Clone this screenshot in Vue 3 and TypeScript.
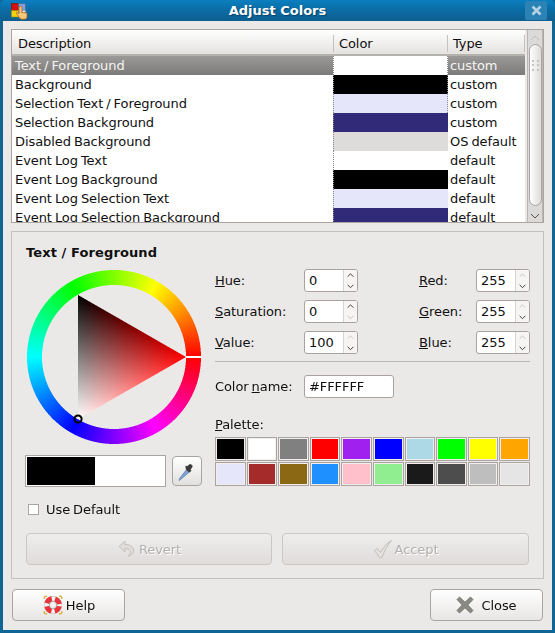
<script setup lang="ts">
import { onMounted, ref } from 'vue'

interface Row { name: string; color: string; type: string }
interface Spin { key: string; post: string; value: string; upOff: boolean; downOff: boolean }

const rows: Row[] = [
  { name: 'Text / Foreground', color: '#ffffff', type: 'custom' },
  { name: 'Background', color: '#000000', type: 'custom' },
  { name: 'Selection Text / Foreground', color: '#e6e6fa', type: 'custom' },
  { name: 'Selection Background', color: '#312a78', type: 'custom' },
  { name: 'Disabled Background', color: '#dedbdb', type: 'OS default' },
  { name: 'Event Log Text', color: '#ffffff', type: 'default' },
  { name: 'Event Log Background', color: '#000000', type: 'default' },
  { name: 'Event Log Selection Text', color: '#e6e6fa', type: 'default' },
  { name: 'Event Log Selection Background', color: '#312a78', type: 'default' },
]

const spins: Spin[] = [
  { key: 'H', post: 'ue:', value: '0', upOff: false, downOff: false },
  { key: 'R', post: 'ed:', value: '255', upOff: true, downOff: false },
  { key: 'S', post: 'aturation:', value: '0', upOff: false, downOff: true },
  { key: 'G', post: 'reen:', value: '255', upOff: true, downOff: false },
  { key: 'V', post: 'alue:', value: '100', upOff: true, downOff: false },
  { key: 'B', post: 'lue:', value: '255', upOff: true, downOff: false },
]

const palette: string[] = [
  '#000000', '#ffffff', '#808080', '#ff0000', '#a020f0', '#0000ff', '#add8e6', '#00ff00', '#ffff00', '#ffa500',
  '#e6e6fa', '#a52a2a', '#8b6914', '#1e90ff', '#ffc0cb', '#90ee90', '#1a1a1a', '#4d4d4d', '#bebebe', '#e5e5e5',
]

const wheel = ref<HTMLCanvasElement | null>(null)

function hsv(h: number): [number, number, number] {
  const i = Math.floor(h * 6) % 6
  const f = h * 6 - Math.floor(h * 6)
  const t: [number, number, number][] = [
    [1, f, 0], [1 - f, 1, 0], [0, 1, f], [0, 1 - f, 1], [f, 0, 1], [1, 0, 1 - f],
  ]
  const c = t[i]
  return [c[0] * 255, c[1] * 255, c[2] * 255]
}

onMounted(() => {
  const cv = wheel.value
  if (!cv) return
  const ctx = cv.getContext('2d')
  if (!ctx) return
  const size = 176
  const img = ctx.createImageData(size, size)
  const cx = 88, cy = 88, ro = 87, ri = 72
  const ax = 160, ay = 88, bx = 52, by = 26, wx = 52, wy = 150
  const den = (by - wy) * (ax - wx) + (wx - bx) * (ay - wy)
  const ss = 3
  for (let y = 0; y < size; y++) {
    for (let x = 0; x < size; x++) {
      let r = 0, g = 0, b = 0, a = 0
      for (let sy = 0; sy < ss; sy++) {
        for (let sx = 0; sx < ss; sx++) {
          const px = x + (sx + 0.5) / ss
          const py = y + (sy + 0.5) / ss
          const dx = px - cx, dy = py - cy
          const d = Math.hypot(dx, dy)
          if (d <= ro && d >= ri) {
            let ang = Math.atan2(-dy, dx) / (2 * Math.PI)
            if (ang < 0) ang += 1
            const c = hsv(ang)
            r += c[0]; g += c[1]; b += c[2]; a += 1
          } else {
            const l1 = ((by - wy) * (px - wx) + (wx - bx) * (py - wy)) / den
            const l2 = ((wy - ay) * (px - wx) + (ax - wx) * (py - wy)) / den
            const l3 = 1 - l1 - l2
            if (l1 >= 0 && l2 >= 0 && l3 >= 0) {
              r += l1 * 255 + l3 * 255
              g += l3 * 255
              b += l3 * 255
              a += 1
            }
          }
        }
      }
      const n = ss * ss
      const i = (y * size + x) * 4
      if (a > 0) {
        img.data[i] = r / a
        img.data[i + 1] = g / a
        img.data[i + 2] = b / a
        img.data[i + 3] = (a / n) * 255
      }
    }
  }
  ctx.putImageData(img, 0, 0)
  ctx.fillStyle = '#ffffff'
  ctx.fillRect(160, 87, 15, 2)
  ctx.beginPath()
  ctx.arc(52, 150, 3.6, 0, Math.PI * 2)
  ctx.lineWidth = 2
  ctx.strokeStyle = '#000000'
  ctx.stroke()
})
</script>

<template>
  <div class="window">
    <header class="titlebar">
      <svg class="app-icon" width="17" height="18" viewBox="0 0 17 18">
        <rect x="0.500" y="1.500" width="7" height="7" fill="#d80f0f" stroke="#7a1010" stroke-width="0.6" />
        <rect x="7.500" y="1.500" width="7" height="7" fill="#7f9fd6" stroke="#47609a" stroke-width="0.6" />
        <rect x="0.500" y="8.500" width="7" height="6.500" fill="#f4d30e" stroke="#9c8a10" stroke-width="0.6" />
        <rect x="7.500" y="8.500" width="7" height="6.500" fill="#e6e6ee" stroke="#9a9aa8" stroke-width="0.6" />
        <path d="M8 5v6.700l-1.600-1.400c-.9-.5-1.500.4-.9 1.100L8.500 16c.5.800 1 1.200 2 1.200h3c1.300 0 2.500-.9 2.500-2.200v-3.400c0-1.100-1.500-1.200-1.800-.3 0-1-1.500-1.100-1.700-.2 0-1-1.500-1-1.600-.1V5c0-1.200-1.900-1.200-1.900 0z" fill="#f8c878" stroke="#a8641c" stroke-width="0.8" />
      </svg>
      <span class="title">Adjust Colors</span>
      <span class="win-close">
        <svg width="11" height="11" viewBox="0 0 11 11">
          <path d="M1.500 1.500l8 8M9.500 1.500l-8 8" stroke="#b4d2e4" stroke-width="2.600" fill="none" />
        </svg>
      </span>
    </header>

    <main class="client">
      <section class="list-frame">
        <div class="list">
          <div class="head">
            <span class="h-desc">Description</span>
            <span class="h-color">Color</span>
            <span class="h-type">Type</span>
          </div>
          <div class="body">
            <div v-for="(row, i) in rows" :key="row.name" class="row" :class="{ selected: i === 0 }">
              <span class="c-desc">{{ row.name }}</span>
              <span class="c-color" :class="{ edge: i < 3 }" :style="{ background: row.color }"></span>
              <span class="c-type">{{ row.type }}</span>
            </div>
          </div>
        </div>
        <div class="scroll">
          <svg class="s-arrow" width="14" height="12" viewBox="0 0 14 12">
            <path d="M3 8l4-4 4 4" stroke="#c4c0bd" fill="none" />
          </svg>
          <div class="s-thumb">
            <span class="grip"><i v-for="n in 6" :key="n"></i></span>
          </div>
          <div class="s-rest"></div>
          <svg class="s-arrow" width="14" height="12" viewBox="0 0 14 12">
            <path d="M3 4l4 4 4-4" stroke="#55504c" fill="none" />
          </svg>
        </div>
      </section>

      <section class="group">
        <h2 class="group-title">Text / Foreground</h2>
        <div class="editor">
          <div class="left">
            <canvas ref="wheel" class="wheel" width="176" height="176"></canvas>
            <div class="swatch-row">
              <div class="swatch"><span class="old"></span><span class="new"></span></div>
              <button class="picker" type="button" aria-label="Pick a color">
                <svg width="20" height="22" viewBox="0 0 20 22">
                  <path d="M3.500 19.500l-1.500 1 .6-2 6.600-8.500 2.800 2.200z" fill="#7ea3d6" stroke="#5a80b0" stroke-width="0.8" />
                  <path d="M9.200 9.500l3.300 2.800 1.500-1.500-.6-1.400 1.500-2.100c1.200-1.600-1.200-3.800-2.800-2.400l-1.900 1.700-1.400-.5z" fill="#3a3a3a" stroke="#262626" stroke-width="0.6" />
                </svg>
              </button>
            </div>
          </div>
          <div class="right">
            <div class="spins">
              <template v-for="s in spins" :key="s.key">
                <label class="lab"><u>{{ s.key }}</u>{{ s.post }}</label>
                <div class="spin">
                  <span class="spin-val">{{ s.value }}</span>
                  <span class="spin-btns">
                    <svg width="13" height="11" viewBox="0 0 13 11">
                      <path d="M3.500 7l3-3 3 3" :stroke="s.upOff ? '#c6c2bf' : '#3c3835'" fill="none" />
                    </svg>
                    <svg width="13" height="11" viewBox="0 0 13 11">
                      <path d="M3.500 4l3 3 3-3" :stroke="s.downOff ? '#c6c2bf' : '#3c3835'" fill="none" />
                    </svg>
                  </span>
                </div>
              </template>
            </div>
            <hr class="sep" />
            <div class="name-row">
              <label class="lab name-lab">Color <u>n</u>ame:</label>
              <div class="entry">#FFFFFF</div>
            </div>
            <div class="pal-label"><u>P</u>alette:</div>
            <div class="palette">
              <span v-for="(c, i) in palette" :key="i" class="cell"><span :style="{ background: c }"></span></span>
            </div>
          </div>
        </div>
        <label class="check"><span class="box"></span>Use Default</label>
        <div class="actions">
          <button class="btn off" type="button" disabled>
            <svg width="20" height="20" viewBox="0 0 20 20">
              <path d="M8 2L2 7.500 8 13V9.600c3 0 5 1 5.400 3 .3 1.700-.6 3.400-2.400 4.600 3.600-.6 6-3 5.600-6.200C16.200 7.700 12.600 5.600 8 5.400z" fill="#dfdcd9" stroke="#c4c1be" />
            </svg>
            Revert
          </button>
          <button class="btn off" type="button" disabled>
            <svg width="20" height="20" viewBox="0 0 20 20">
              <path d="M1.500 11.500l3-2 3 4C10.500 8.500 13.500 4 18.500 1.500c-3.500 4-6.800 9.500-9.500 17-1 .3-1.500.3-2.200 0z" fill="#e4e1de" stroke="#c2bfbc" />
            </svg>
            Accept
          </button>
        </div>
      </section>

      <footer class="footer">
        <button class="btn main" type="button">
          <svg width="22" height="22" viewBox="0 0 22 22">
            <g stroke="#d2aa22" stroke-width="1.200" fill="none">
              <path d="M5 2.500C3.200 1.200 1.200 3.200 2.500 5" />
              <path d="M17 2.500c1.800-1.300 3.800.7 2.500 2.500" />
              <path d="M5 19.500c-1.800 1.300-3.800-.7-2.500-2.500" />
              <path d="M17 19.500c1.800 1.300 3.800-.7 2.500-2.500" />
            </g>
            <circle cx="11" cy="11" r="9" fill="#8d8d8d" />
            <circle cx="11" cy="11" r="6.300" fill="none" stroke="#f6f2f0" stroke-width="5" />
            <circle cx="11" cy="11" r="6.300" fill="none" stroke="#e8343a" stroke-width="5" stroke-dasharray="6.600 3.300" transform="rotate(12 11 11)" />
            <circle cx="11" cy="11" r="3.600" fill="#f4f1ef" stroke="#999" stroke-width="0.6" />
          </svg>
          Help
        </button>
        <button class="btn main" type="button">
          <svg class="x-icon" width="18" height="18" viewBox="0 0 18 18">
            <path d="M3.500 1L9 6.200 14.500 1 17 3.500 11.800 9 17 14.500 14.500 17 9 11.800 3.500 17 1 14.500 6.200 9 1 3.500z" fill="#8a8a84" stroke="#6b6b66" stroke-width="0.8" stroke-linejoin="round" />
          </svg>
          Close
        </button>
      </footer>
    </main>
  </div>
</template>

<style>
html, body { margin: 0; padding: 0; background: #0f6594; }
</style>

<style scoped>
.window {
  width: 555px;
  height: 633px;
  box-sizing: border-box;
  padding: 0 3px 3px;
  background: #0f6594;
  display: flex;
  flex-direction: column;
  font-family: "DejaVu Sans", sans-serif;
  font-size: 13px;
  color: #101010;
  overflow: hidden;
}
.titlebar {
  height: 21px;
  margin: 0 -3px;
  flex: none;
  position: relative;
  display: flex;
  align-items: center;
  justify-content: center;
  background: linear-gradient(#0b7fc0 0%, #0a6da6 45%, #0e5f8f 100%);
  border-radius: 5px 5px 0 0;
}
.app-icon { position: absolute; left: 11px; top: 2px; }
.title {
  color: #fff;
  font-weight: bold;
  font-size: 13px;
  text-shadow: 1px 1px 1px rgba(0, 40, 70, .6);
}
.win-close {
  position: absolute;
  left: 525px;
  top: 1px;
  width: 22px;
  height: 19px;
  display: flex;
  align-items: center;
  justify-content: center;
  background: #2a83b4;
  border-radius: 2px;
}
.client {
  flex: 1;
  min-height: 0;
  background: #ebe9e8;
  padding: 8px 8px 9px;
  display: flex;
  flex-direction: column;
  letter-spacing: -0.08px;
  word-spacing: -1px;
}
.list-frame {
  height: 194px;
  flex: none;
  box-sizing: border-box;
  border: 1px solid #aaa5a1;
  display: flex;
  overflow: hidden;
}
.list { width: 513px; flex: none; background: #fff; overflow: hidden; }
.head {
  height: 26px;
  box-sizing: border-box;
  display: flex;
  align-items: center;
  padding-top: 2px;
  background: linear-gradient(#ffffff, #e4e2e0);
  border-bottom: 2px solid #b5b1ad;
}
.head span { box-sizing: border-box; height: 17px; line-height: 17px; padding-left: 5px; }
.h-desc { width: 322px; padding-left: 6px !important; border-right: 1px solid #c5c1be; }
.h-color { width: 114px; border-right: 1px solid #c5c1be; }
.h-type { flex: 1; border-right: 1px solid #c5c1be; }
.body { height: 166px; overflow: hidden; }
.row { height: 19px; line-height: 19px; display: flex; background: #fff; }
.row.selected { background: linear-gradient(#9c9a98, #7d7b79); color: #f5f5f5; }
.c-desc { width: 321px; padding-left: 3px; box-sizing: border-box; white-space: nowrap; overflow: hidden; }
.c-color {
  width: 115px;
  box-sizing: border-box;
  border-left: 1px dotted #8a8a8a;
  border-right: 1px solid transparent;
}
.c-color.edge { border-right: 1px dotted #8a8a8a; }
.c-type { flex: 1; padding-left: 2px; white-space: nowrap; }
.scroll {
  width: 15px;
  margin-left: 2px;
  flex: 1;
  display: flex;
  flex-direction: column;
  align-items: center;
  background: #dcdad8;
  border-left: 1px solid #b9b5b2;
  border-right: 1px solid #b9b5b2;
  box-sizing: border-box;
}
.s-arrow { flex: none; margin: 2px 0 0; }
.s-thumb {
  width: 13px;
  height: 162px;
  flex: none;
  box-sizing: border-box;
  border: 1px solid #aaa5a1;
  border-radius: 7px;
  background: linear-gradient(90deg, #ffffff, #dedcda);
  display: flex;
  justify-content: center;
  padding-top: 15px;
}
.grip { width: 7px; height: 11px; display: grid; grid-template-columns: 2px 2px; gap: 2px 3px; }
.grip i { display: block; width: 2px; height: 2px; background: #c6c3c0; }
.s-rest { flex: 1; }
.group {
  margin-top: 8px;
  height: 348px;
  flex: none;
  box-sizing: border-box;
  border: 1px solid #c4c1be;
  background: #ebe9e8;
  padding: 13px 14px 0;
  display: flex;
  flex-direction: column;
}
.group-title {
  margin: 0;
  font-size: 13px;
  font-weight: bold;
  line-height: 16px;
  height: 24px;
  letter-spacing: 0.1px;
  word-spacing: 0;
}
.editor { display: flex; gap: 13px; height: 218px; }
.left { width: 176px; flex: none; }
.wheel { display: block; width: 176px; height: 176px; }
.swatch-row { margin: 10px 0 0 -1px; display: flex; align-items: center; gap: 6px; }
.swatch {
  width: 141px;
  height: 32px;
  box-sizing: border-box;
  border: 1px solid #aaa5a1;
  padding: 1px;
  background: #fff;
  display: flex;
}
.old { width: 68px; background: #000; }
.new { flex: 1; background: #fff; }
.picker {
  width: 30px;
  height: 30px;
  padding: 0;
  border: 1px solid #aaa5a1;
  border-radius: 4px;
  background: linear-gradient(#fff, #e2e0de);
  display: flex;
  align-items: center;
  justify-content: center;
}
.right { width: 315px; flex: none; }
.spins {
  display: grid;
  grid-template-columns: 89px 54px 61px 57px 54px;
  grid-auto-rows: 23px;
  row-gap: 8px;
}
.spins .lab:nth-child(4n + 1) { grid-column: 1; }
.spins .lab:nth-child(4n + 3) { grid-column: 4; }
.spins .spin:nth-child(4n + 2) { grid-column: 2; }
.spins .spin:nth-child(4n) { grid-column: 5; }
.lab { line-height: 23px; white-space: nowrap; }
.spin {
  box-sizing: border-box;
  border: 1px solid #a9a29e;
  border-radius: 3px;
  background: #fff;
  display: flex;
  overflow: hidden;
}
.spin-val { flex: 1; padding-left: 4px; line-height: 21px; }
.spin-btns {
  width: 13px;
  flex: none;
  border-left: 1px solid #d6d3d0;
  background: #f6f5f4;
  display: flex;
  flex-direction: column;
}
.spin-btns svg { display: block; }
.sep { border: 0; border-top: 1px solid #bdb9b6; margin: 7px 0 13px; height: 1px; background: #fafafa; box-sizing: border-box; }
.name-row { display: flex; align-items: center; height: 23px; }
.name-lab { width: 89px; }
.entry {
  width: 90px;
  height: 23px;
  box-sizing: border-box;
  border: 1px solid #a9a29e;
  border-radius: 3px;
  background: #fff;
  padding-left: 4px;
  line-height: 21px;
}
.pal-label { margin-top: 18px; height: 21px; line-height: 18px; }
.palette {
  width: 315px;
  display: grid;
  grid-template-columns: repeat(10, 1fr);
  grid-auto-rows: 24px;
  gap: 1px;
}
.cell {
  box-sizing: border-box;
  border: 1px solid #aaa3a0;
  padding: 1px;
  background: #f0eeee;
  display: flex;
}
.cell span { flex: 1; }
.check {
  margin-top: 17px;
  margin-left: 2px;
  height: 11px;
  display: flex;
  align-items: center;
  gap: 7px;
}
.box {
  width: 11px;
  height: 11px;
  box-sizing: border-box;
  border: 1px solid #aaa5a1;
  background: #fff;
}
.actions { margin-top: 18px; display: grid; grid-template-columns: 246px 247px; gap: 10px; }
.btn {
  font: inherit;
  color: inherit;
  letter-spacing: inherit;
  height: 32px;
  box-sizing: border-box;
  border: 1px solid #aaa5a1;
  border-radius: 4px;
  padding: 0;
  display: flex;
  align-items: center;
  justify-content: center;
  gap: 2px;
}
.btn.off {
  border-color: #c9c6c3;
  background: linear-gradient(#efeeed, #dfdcda);
  color: #b3b0ad;
  text-shadow: 1px 1px 0 #fff;
}
.footer { margin: 10px 1px 0; display: flex; justify-content: space-between; }
.btn.main { width: 113px; background: linear-gradient(#ffffff, #e8e6e4); }
.x-icon { margin-right: 5px; }
</style>
